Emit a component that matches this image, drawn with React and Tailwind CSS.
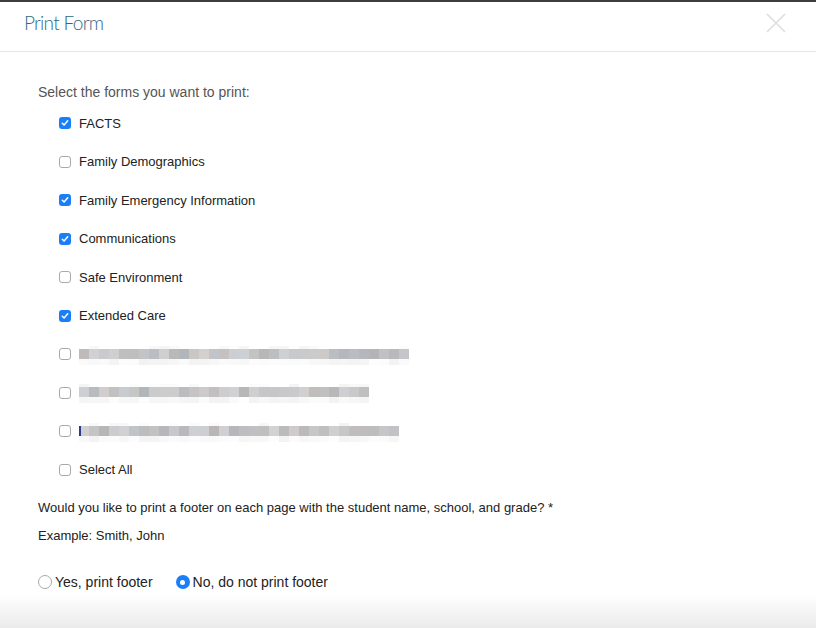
import React from "react";

const items = [
  { label: "FACTS", checked: true },
  { label: "Family Demographics", checked: false },
  { label: "Family Emergency Information", checked: true },
  { label: "Communications", checked: true },
  { label: "Safe Environment", checked: false },
  { label: "Extended Care", checked: true },
  { blur: 33, seed: 3 },
  { blur: 29, seed: 11 },
  { blur: 32, seed: 23, caret: true },
  { label: "Select All", checked: false },
];

function rnd(seed) {
  let s = seed * 9301 + 49297;
  return () => {
    s = (s * 9301 + 49297) % 233280;
    return s / 233280;
  };
}

function Blur({ count, seed, caret }) {
  const r = rnd(seed);
  const blocks = [];
  for (let i = 0; i < count; i++) {
    const g = Math.round(180 + r() * 30);
    const tint = Math.round((r() - 0.5) * 6);
    const top = Math.round(243 + r() * 12);
    const bot = Math.round(242 + r() * 12);
    const showTop = r() > 0.6;
    blocks.push(
      <div key={i} className="flex flex-col w-[10px]">
        <div
          className="h-[3px]"
          style={{ background: showTop ? `rgb(${top},${top},${top})` : "#fff" }}
        />
        <div
          className="h-[10px]"
          style={{ background: `rgb(${g + tint},${g},${g - tint + 2})` }}
        />
        <div className="h-[6px]" style={{ background: `rgb(${bot},${bot},${bot + 1})` }} />
      </div>
    );
  }
  return (
    <div className="relative flex mt-[2px]">
      {blocks}
      {caret && <div className="absolute left-0 top-[3px] w-[2px] h-[10px] bg-[#2a3a8a]" />}
    </div>
  );
}

function Checkbox({ checked }) {
  if (checked) {
    return (
      <div className="w-[12px] h-[12px] rounded-[3px] bg-[#1a7ff6] flex items-center justify-center">
        <svg width="8" height="8" viewBox="0 0 8 8">
          <path d="M1.3 4.2 L3.1 6 L6.7 1.8" fill="none" stroke="#fff" strokeWidth="1.5" strokeLinecap="round" strokeLinejoin="round" />
        </svg>
      </div>
    );
  }
  return <div className="w-[12px] h-[12px] rounded-[3px] border border-[#a9a9a9] bg-white" />;
}

export default function App() {
  return (
    <div
      className="w-[816px] h-[628px] bg-white flex flex-col overflow-hidden"
      style={{ fontFamily: '"Liberation Sans", Arial, sans-serif' }}
    >
      <div className="h-[2px] bg-[#3d3d3d]" />
      <div className="h-[50px] border-b border-[#e5e5e5] flex items-center justify-between pl-[24px] pr-[30px]">
        <div
          className="text-[19px] font-light tracking-[-0.7px] text-[#2f6983] leading-none -mt-[9px]"
          style={{ fontFamily: 'Lato, "Liberation Sans", sans-serif' }}
        >
          Print Form
        </div>
        <svg width="20" height="20" viewBox="0 0 20 20" className="-mt-[8px]">
          <path d="M1 1 L19 19 M19 1 L1 19" stroke="#dedede" strokeWidth="1.6" />
        </svg>
      </div>

      <div className="pl-[38px] flex flex-col">
        <div className="mt-[30px] h-[20px] leading-[20px] text-[14px] text-[#555]">
          Select the forms you want to print:
        </div>
        <div className="mt-[2px] flex flex-col pl-[21px]">
          {items.map((it, i) => (
            <div key={i} className="h-[38.5px] flex items-center gap-[8px]">
              <Checkbox checked={!!it.checked} />
              {it.blur ? (
                <Blur count={it.blur} seed={it.seed} caret={it.caret} />
              ) : (
                <span className="text-[13px] text-[#222]">{it.label}</span>
              )}
            </div>
          ))}
        </div>
        <div className="mt-[9px] h-[20px] leading-[20px] text-[13px] text-[#222]">
          Would you like to print a footer on each page with the student name, school, and grade? *
        </div>
        <div className="mt-[8px] h-[20px] leading-[20px] text-[13px] text-[#222]">
          Example: Smith, John
        </div>
        <div className="mt-[26px] h-[20px] flex items-center text-[14px] text-[#222]">
          <div className="flex items-center gap-[3px]">
            <div className="w-[14px] h-[14px] rounded-full border border-[#a9a9a9] bg-white" />
            <span>Yes, print footer</span>
          </div>
          <div className="flex items-center gap-[3px] ml-[23px]">
            <div className="w-[14px] h-[14px] rounded-full bg-[#1a7ff6] flex items-center justify-center">
              <div className="w-[5px] h-[5px] rounded-full bg-white" />
            </div>
            <span>No, do not print footer</span>
          </div>
        </div>
      </div>
      <div className="mt-auto h-[34px] bg-gradient-to-b from-white to-[#ebebeb]" />
    </div>
  );
}
